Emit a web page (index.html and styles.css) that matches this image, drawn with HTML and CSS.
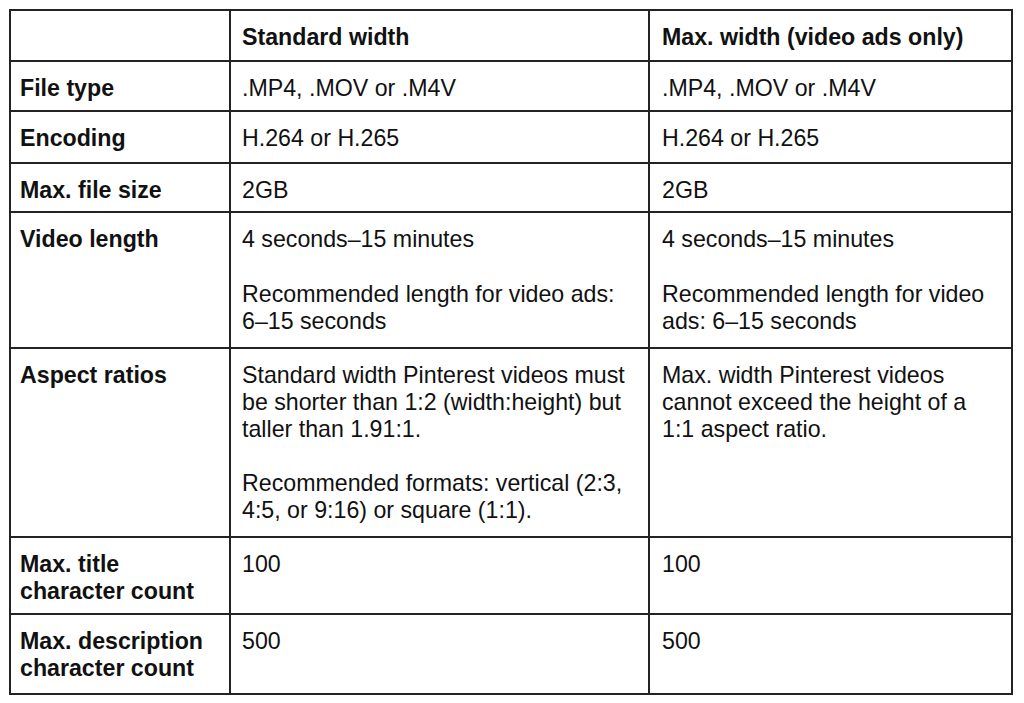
FILE: index.html
```html
<!DOCTYPE html>
<html lang="en">
<head>
<meta charset="utf-8">
<title>Pinterest video specs</title>
<link rel="stylesheet" href="styles.css">
</head>
<body>
<table class="specs">
  <colgroup>
    <col class="c1">
    <col class="c2">
    <col class="c3">
  </colgroup>
  <tr class="r-head">
    <th></th>
    <th>Standard width</th>
    <th>Max. width (video ads only)</th>
  </tr>
  <tr class="r-type">
    <th>File type</th>
    <td>.MP4, .MOV or .M4V</td>
    <td>.MP4, .MOV or .M4V</td>
  </tr>
  <tr class="r-enc">
    <th>Encoding</th>
    <td>H.264 or H.265</td>
    <td>H.264 or H.265</td>
  </tr>
  <tr class="r-size">
    <th>Max. file size</th>
    <td>2GB</td>
    <td>2GB</td>
  </tr>
  <tr class="r-len">
    <th>Video length</th>
    <td><p>4 seconds–15 minutes</p><p>Recommended length for video ads: 6–15 seconds</p></td>
    <td><p>4 seconds–15 minutes</p><p>Recommended length for video ads: 6–15 seconds</p></td>
  </tr>
  <tr class="r-aspect">
    <th>Aspect ratios</th>
    <td><p>Standard width Pinterest videos must be shorter than 1:2 (width:height) but taller than 1.91:1.</p><p>Recommended formats: vertical (2:3, 4:5, or 9:16) or square (1:1).</p></td>
    <td><p>Max. width Pinterest videos cannot exceed the height of a 1:1 aspect ratio.</p></td>
  </tr>
  <tr class="r-title">
    <th>Max. title character count</th>
    <td>100</td>
    <td>100</td>
  </tr>
  <tr class="r-desc">
    <th>Max. description character count</th>
    <td>500</td>
    <td>500</td>
  </tr>
</table>
</body>
</html>
```

FILE: styles.css
```css
html, body {
  margin: 0;
  padding: 0;
  background: #ffffff;
}

body {
  font-family: "Liberation Sans", Arial, Helvetica, sans-serif;
  color: #111111;
}

.specs {
  margin: 9px 0 0 9px;
  width: 1002px;
  border-collapse: collapse;
  table-layout: fixed;
  font-size: 23.2px;
  line-height: 26.8px;
}

.c1 { width: 220px; }
.c2 { width: 419px; }
.c3 { width: 363px; }

.specs th,
.specs td {
  border: 2px solid #232323;
  vertical-align: top;
  text-align: left;
  padding: 13px 11px 7px 11px;
}

.specs th {
  font-weight: bold;
}

.specs td {
  font-weight: normal;
}

.specs tr > :first-child {
  padding-left: 9px;
}

.specs td:nth-child(3),
.specs th:nth-child(3) {
  padding-left: 12px;
}

.specs p {
  margin: 0;
}

.specs p + p {
  margin-top: 28px;
}

.r-head { height: 51px; }
.r-type { height: 50px; }
.r-enc { height: 52px; }
.r-size { height: 49px; }
.r-len { height: 136px; }
.r-aspect { height: 189px; }
.r-title { height: 77px; }
.r-desc { height: 80px; }
```
